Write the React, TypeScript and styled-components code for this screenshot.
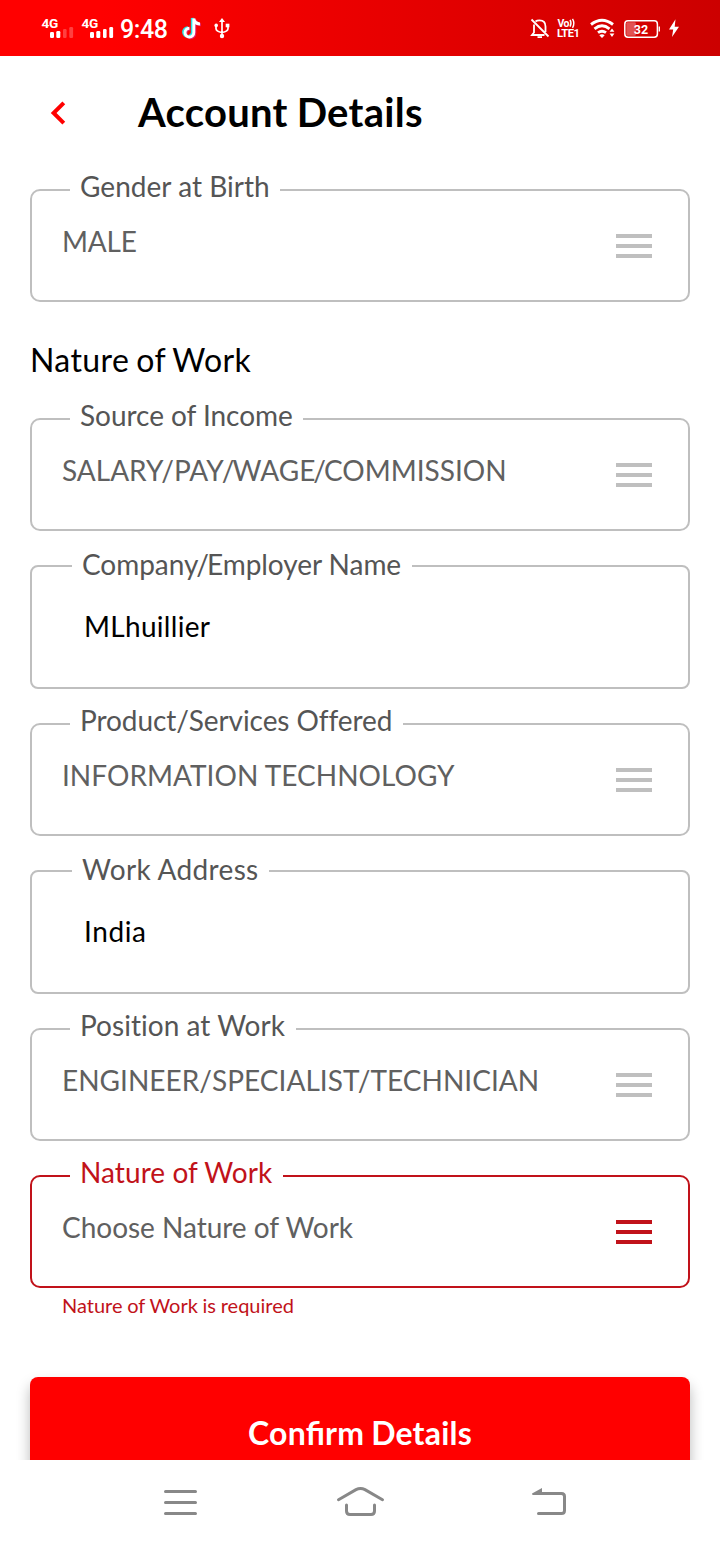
import React from "react";
import styled, { createGlobalStyle } from "styled-components";

const GlobalStyle = createGlobalStyle`
  * { box-sizing: border-box; }
  body { margin: 0; background: #fff; font-family: Lato, "Liberation Sans", sans-serif; }
`;

const Screen = styled.div`
  display: flex;
  flex-direction: column;
  width: 720px;
  height: 1544px;
  overflow: hidden;
  background: #fff;
`;

const StatusBar = styled.header`
  display: flex;
  justify-content: space-between;
  flex: 0 0 56px;
  padding: 0 40px;
  background: linear-gradient(90deg, #ff0000 0%, #ff0000 14%, #cc0000 100%);
  color: #fff;
  font-family: Roboto, sans-serif;
`;

const StatusGroup = styled.div`
  display: flex;
  height: 56px;
`;

const Clock = styled.span`
  width: 60px;
  font-size: 25px;
  font-weight: 500;
  line-height: 60px;
  letter-spacing: -0.4px;
`;

const StatusIcon = styled.svg`
  display: block;
  flex: none;
  font-family: Roboto, sans-serif;
  font-weight: 700;
`;

const Content = styled.main`
  flex: 0 0 1404px;
  overflow: hidden;
  padding: 0 30px;
`;

const TitleBar = styled.div`
  display: flex;
  align-items: center;
  height: 114px;
  margin-bottom: 19px;
`;

const BackButton = styled.button`
  width: 108px;
  height: 40px;
  padding: 0 0 0 20px;
  border: 0;
  background: none;
  text-align: left;
  svg { display: block; }
`;

const Title = styled.h1`
  margin: 0;
  padding-bottom: 2px;
  font-size: 40px;
  font-weight: 700;
  line-height: 48px;
  letter-spacing: 0.27px;
  word-spacing: -1px;
  color: #000;
`;

const SectionHeading = styled.h2`
  margin: 38px 0 39px;
  font-size: 32px;
  font-weight: 400;
  line-height: 39px;
  letter-spacing: 0.4px;
  word-spacing: -1.5px;
  color: #000;
`;

const Fields = styled.div`
  display: flex;
  flex-direction: column;
  gap: 34px;
`;

const FieldBox = styled.div<{ $input?: boolean; $error?: boolean }>`
  position: relative;
  display: flex;
  justify-content: space-between;
  height: ${(p) => (p.$input ? 124 : 113)}px;
  padding: ${(p) => (p.$input ? "42px 36px 0 52px" : "33px 36px 0 30px")};
  border: 2px solid ${(p) => (p.$error ? "#c1121a" : "#bfbfbf")};
  border-radius: ${(p) => (p.$input ? 8 : 10)}px;
  color: ${(p) => (p.$error ? "#c1121a" : "#bfbfbf")};
`;

const FieldLabel = styled.label<{ $input?: boolean; $error?: boolean; $tracking: number }>`
  position: absolute;
  top: ${(p) => (p.$input ? -20 : -22)}px;
  left: ${(p) => (p.$input ? 40 : 38)}px;
  padding: 0 10.6px 0 10px;
  background: #fff;
  font-size: 28px;
  line-height: 34px;
  letter-spacing: ${(p) => p.$tracking}px;
  font-variant-ligatures: none;
  white-space: nowrap;
  color: ${(p) => (p.$error ? "#c1121a" : "#555")};
`;

const FieldValue = styled.span<{ $input?: boolean; $tracking: number }>`
  font-size: 28px;
  line-height: 34px;
  letter-spacing: ${(p) => p.$tracking}px;
  white-space: nowrap;
  color: ${(p) => (p.$input ? "#000" : "#606060")};
`;

const TightSlash = styled.span`
  margin: 0 -2px;
`;

const MenuLines = styled.span`
  display: flex;
  flex-direction: column;
  gap: 6px;
  width: 36px;
  padding-top: 10px;
  &::before, &::after { content: ""; height: 4px; background: currentColor; }
`;

const MenuMiddle = styled.i`
  height: 4px;
  background: currentColor;
`;

const ErrorText = styled.p`
  margin: 5px 0 0 32px;
  font-size: 20px;
  line-height: 24px;
  word-spacing: -0.4px;
  color: #c1121a;
`;

const ConfirmButton = styled.button`
  display: block;
  width: 660px;
  height: 112px;
  margin-top: 60px;
  padding: 0 0 2px;
  border: 0;
  border-radius: 8px;
  background: #ff0000;
  box-shadow: 0 8px 14px rgba(0, 0, 0, 0.28);
  color: #fff;
  font-family: inherit;
  font-size: 32px;
  font-weight: 700;
  letter-spacing: 0.2px;
  word-spacing: -1px;
  font-feature-settings: "liga" 1;
`;

const NavBar = styled.nav`
  display: flex;
  flex: 0 0 84px;
  background: #fff;
`;

type FieldProps = {
  label: React.ReactNode;
  value: React.ReactNode;
  input?: boolean;
  error?: boolean;
  labelTracking?: number;
  valueTracking?: number;
};

function Field({ label, value, input, error, labelTracking = 0, valueTracking = 0 }: FieldProps) {
  return (
    <FieldBox $input={input} $error={error}>
      <FieldLabel $input={input} $error={error} $tracking={labelTracking}>{label}</FieldLabel>
      <FieldValue $input={input} $tracking={valueTracking}>{value}</FieldValue>
      {!input && <MenuLines><MenuMiddle /></MenuLines>}
    </FieldBox>
  );
}

function Signal({ weak }: { weak?: boolean }) {
  const dim = weak ? 0.25 : 1;
  return (
    <StatusIcon width="40" height="56" fill="#fff">
      <text x="1.6" y="28" fontSize="13.6" letterSpacing="-0.3">4G</text>
      <rect x="10" y="32" width="4" height="6" rx="1.2" />
      <rect x="16.3" y="31" width="4" height="7" rx="1.2" />
      <rect x="23" y="29" width="3.6" height="9" rx="1.2" opacity={dim} />
      <rect x="29.3" y="27" width="3.8" height="11" rx="1.2" opacity={dim} />
    </StatusIcon>
  );
}

const NOTE = "M193.8 18.5v14a4.4 4.4 0 1 1-4.4-4.3M193.8 18.5c.4 3.4 2.8 5.3 6.2 5.5";

export default function App() {
  return (
    <>
      <GlobalStyle />
      <Screen>
        <StatusBar>
          <StatusGroup>
            <Signal weak />
            <Signal />
            <Clock>9:48</Clock>
            <StatusIcon width="60" height="56" viewBox="180 0 60 56" fill="none">
              <g strokeWidth="2.9">
                <path d={NOTE} stroke="#25e5e5" transform="translate(-1.5 -.6)" />
                <path d={NOTE} stroke="#e0246c" transform="translate(1 .8)" />
                <path d={NOTE} stroke="#fff" />
              </g>
              <g stroke="#fff" strokeWidth="1.7">
                <path d="M222 21v14M216 26v2.5q0 3 6 4 6-1 6-4V26" />
                <path d="M222 18l3 4h-6z" fill="#fff" stroke="none" />
                <circle cx="222" cy="36" r="2.2" fill="#fff" stroke="none" />
                <circle cx="216.2" cy="25.4" r="1.8" fill="#fff" stroke="none" />
                <path d="M225.7 23.7h3.7v3.6h-3.7z" fill="#fff" stroke="none" />
              </g>
            </StatusIcon>
          </StatusGroup>
          <StatusGroup>
            <StatusIcon width="28" height="56" viewBox="528 0 28 56" fill="none" stroke="#fff" strokeWidth="1.8">
              <path d="M531.5 19.5L548.5 36.5M534 24.5v8l-2 2.5h12.5M535.5 21.5q1.5-1.2 4-1.2 6 0 6 6.2v5.5M537.5 37.2h4.5" />
            </StatusIcon>
            <StatusIcon width="32" height="56" viewBox="556 0 32 56" fill="#fff">
              <text x="557.5" y="26.8" fontSize="10.5" letterSpacing="-0.5">Vo</text>
              <path d="M570 19.8q2 3.3 0 6.8M572.5 18.8q2.8 4.5 0 9" fill="none" stroke="#fff" strokeWidth="1.4" />
              <text x="557" y="37" fontSize="11.2" textLength="23">LTE1</text>
            </StatusIcon>
            <StatusIcon width="34" height="56" viewBox="588 0 34 56" fill="none" stroke="#fff" strokeWidth="2.9">
              <path d="M591 24.5q11-8.5 22 0M594.5 28.8q7.5-6 15 0M598 32.7q4-3 8 0" />
              <path d="M599.3 35.2q2.7-1.8 5.4 0L602 38z" fill="#fff" stroke="none" />
              <path d="M609.6 31.8l2.4-3.4 2.4 3.4zM609.6 33.6l2.4 3.4 2.4-3.4z" fill="#fff" stroke="none" />
            </StatusIcon>
            <StatusIcon width="42" height="56" viewBox="622 0 42 56">
              <rect x="624.8" y="20.8" width="32.6" height="16.4" rx="3.2" fill="none" stroke="#fff" strokeWidth="1.5" />
              <rect x="626.3" y="22.3" width="9.5" height="13.4" rx="1" fill="#fff" opacity=".32" />
              <path d="M659.3 26.5v5" stroke="#fff" strokeWidth="1.3" />
              <text x="641" y="33.8" fontSize="12.5" textAnchor="middle" fill="#fff">32</text>
            </StatusIcon>
            <StatusIcon width="16" height="56" viewBox="664 0 16 56" fill="#fff">
              <path d="M675.5 19.3L669 29.5h4.2L672 37l7-10.3h-4.3z" />
            </StatusIcon>
          </StatusGroup>
        </StatusBar>

        <Content>
          <TitleBar>
            <BackButton aria-label="Back">
              <svg width="18" height="40" fill="none" stroke="#ff0000" strokeWidth="4">
                <path d="M13.8 9.8L3.6 20l10.2 10.2" />
              </svg>
            </BackButton>
            <Title>Account Details</Title>
          </TitleBar>
          <Field label="Gender at Birth" value="MALE" labelTracking={0.03} valueTracking={-0.2} />
          <SectionHeading>Nature of Work</SectionHeading>
          <Fields>
            <Field
              label="Source of Income"
              labelTracking={-0.04}
              value={<>SALARY/PAY<TightSlash>/</TightSlash>WAGE<TightSlash>/</TightSlash>COMMISSION</>}
            />
            <Field
              label={<>Company<TightSlash>/</TightSlash>Employer Name</>}
              labelTracking={-0.05}
              value="MLhuillier"
              valueTracking={0.3}
              input
            />
            <Field label="Product/Services Offered" labelTracking={-0.08} value="INFORMATION TECHNOLOGY" valueTracking={0.03} />
            <Field label="Work Address" labelTracking={0.33} value="India" valueTracking={0.6} input />
            <Field label="Position at Work" labelTracking={0.03} value="ENGINEER/SPECIALIST/TECHNICIAN" valueTracking={0.03} />
            <Field label="Nature of Work" labelTracking={0.08} value="Choose Nature of Work" valueTracking={-0.02} error />
          </Fields>
          <ErrorText>Nature of Work is required</ErrorText>
          <ConfirmButton>Confirm Details</ConfirmButton>
        </Content>

        <NavBar>
          <svg width="720" height="84" viewBox="0 1460 720 84" fill="none" stroke="#888" strokeWidth="3" strokeLinecap="round">
            <path d="M165.5 1491.5h30M165.5 1502.5h30M165.5 1513.5h30" />
            <path d="M338.5 1499.7L356 1489.6q4.5-2.3 9 0L382.5 1499.7M346.5 1505v6q0 3.5 3.5 3.5h21q3.5 0 3.5-3.5v-6" />
            <path d="M538 1493.5h23.5q3 0 3 3v14q0 3-3 3h-23" />
            <path d="M532 1493.5L542 1488v7h-9.5z" fill="#888" stroke="none" />
          </svg>
        </NavBar>
      </Screen>
    </>
  );
}
